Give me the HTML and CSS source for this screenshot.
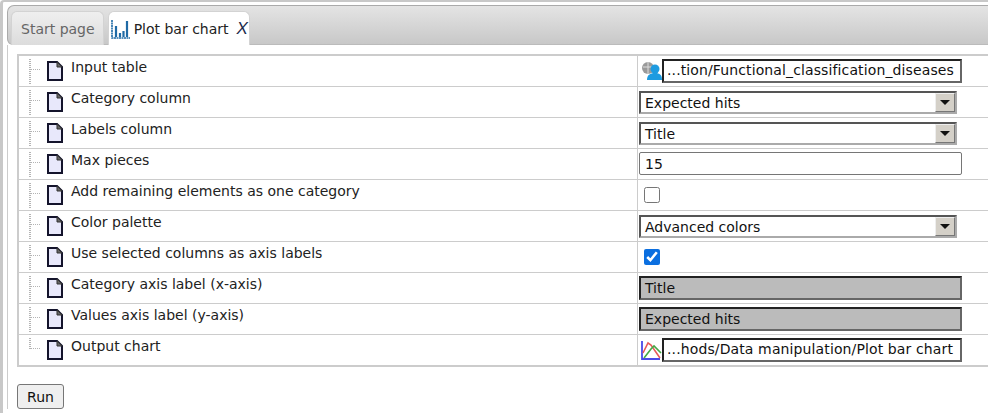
FILE: index.html
```html
<!doctype html>
<html>
<head>
	<meta charset="utf-8">
	<title>Plot bar chart</title>
	<link rel="stylesheet" href="styles.css">
</head>
<body>
<svg class="defs" width="0" height="0">
	<symbol id="file" viewBox="0 0 16 20">
		<path d="M1 1H10L15 6V19H1Z" fill="#e8e8fb" stroke="#14142c" stroke-width="2"/>
		<path d="M10 1L15 6H10Z" fill="#666" stroke="#333"/>
	</symbol>
</svg>
<div class="outer">
	<div class="panel">
		<div class="tabs">
			<div class="tab">Start page</div>
			<div class="tab active">
				<svg class="tab-icon" width="19" height="20" viewBox="0 0 19 20">
					<path d="M1 1V19H19" fill="none" stroke="#1f6aa5" stroke-dasharray="2 .5" stroke-width="1.6"/>
					<path d="M5 18V7M9 18V14M12.500 18V12M16 18V2" stroke="#1f6aa5" stroke-width="2.200" fill="none"/>
				</svg>
				<span>Plot bar chart</span>
				<i class="close">X</i>
			</div>
		</div>
		<div class="content">
			<table class="props">
				<tr>
					<td class="name"><span class="tree"></span><svg class="file"><use href="#file"/></svg><span class="label">Input table</span></td>
					<td class="value"><div class="path">
						<svg class="path-icon" width="21" height="20" viewBox="0 0 21 20">
							<circle cx="7" cy="7" r="6" fill="#9a9a9a"/>
							<path d="M2 6H12M7 1V13" stroke="#ddd"/>
							<circle cx="14" cy="8" r="4.500" fill="#1e9be0"/>
							<path d="M6 19C6 14 9 12 14 12S21 14 21 19Z" fill="#1e9be0"/>
						</svg>
						<div class="path-box">...tion/Functional_classification_diseases</div>
					</div></td>
				</tr>
				<tr>
					<td class="name"><span class="tree"></span><svg class="file"><use href="#file"/></svg><span class="label">Category column</span></td>
					<td class="value"><div class="combo">Expected hits<span class="arrow"></span></div></td>
				</tr>
				<tr>
					<td class="name"><span class="tree"></span><svg class="file"><use href="#file"/></svg><span class="label">Labels column</span></td>
					<td class="value"><div class="combo">Title<span class="arrow"></span></div></td>
				</tr>
				<tr>
					<td class="name"><span class="tree"></span><svg class="file"><use href="#file"/></svg><span class="label">Max pieces</span></td>
					<td class="value"><div class="field">15</div></td>
				</tr>
				<tr>
					<td class="name"><span class="tree"></span><svg class="file"><use href="#file"/></svg><span class="label">Add remaining elements as one category</span></td>
					<td class="value"><input class="check" type="checkbox"></td>
				</tr>
				<tr>
					<td class="name"><span class="tree"></span><svg class="file"><use href="#file"/></svg><span class="label">Color palette</span></td>
					<td class="value"><div class="combo">Advanced colors<span class="arrow"></span></div></td>
				</tr>
				<tr>
					<td class="name"><span class="tree"></span><svg class="file"><use href="#file"/></svg><span class="label">Use selected columns as axis labels</span></td>
					<td class="value"><input class="check" type="checkbox" checked></td>
				</tr>
				<tr>
					<td class="name"><span class="tree"></span><svg class="file"><use href="#file"/></svg><span class="label">Category axis label (x-axis)</span></td>
					<td class="value"><div class="disabled">Title</div></td>
				</tr>
				<tr>
					<td class="name"><span class="tree"></span><svg class="file"><use href="#file"/></svg><span class="label">Values axis label (y-axis)</span></td>
					<td class="value"><div class="disabled">Expected hits</div></td>
				</tr>
				<tr>
					<td class="name"><span class="tree last"></span><svg class="file"><use href="#file"/></svg><span class="label">Output chart</span></td>
					<td class="value"><div class="path">
						<svg class="path-icon" width="21" height="20" viewBox="0 0 21 20">
							<path d="M1 1V19H19" fill="none" stroke="#4a4ae8" stroke-width="1.800"/>
							<path d="M2 13L7 3L10 5L19 18" fill="none" stroke="#e85a5a" stroke-width="1.600"/>
							<path d="M3 18L10 9L13 6L20 13" fill="none" stroke="#45a845" stroke-width="1.600"/>
						</svg>
						<div class="path-box">...hods/Data manipulation/Plot bar chart</div>
					</div></td>
				</tr>
			</table>
			<button class="run">Run</button>
		</div>
	</div>
</div>
</body>
</html>
```

FILE: styles.css
```css
html, body {
	margin: 0;
	height: 413px;
	overflow: hidden;
	background: #fff;
}
body {
	font-family: "DejaVu Sans", sans-serif;
	font-size: 14px;
	color: #222;
}
.defs {
	display: block;
}
.outer {
	height: 413px;
	box-sizing: border-box;
	border-top: 2px solid #c8c8c8;
	border-left: 3px solid #c8c8c8;
	border-radius: 4px 0 0 0;
	padding: 3px 0 0 4px;
}
.tabs {
	display: flex;
	gap: 4px;
	height: 40px;
	padding: 5px 0 0 3px;
	box-sizing: border-box;
	background: linear-gradient(#e4e4e4, #c8c8c8);
	border: 1px solid #aaa;
	border-bottom: 1px solid #bbb;
	border-right: 0;
	border-radius: 7px 0 0 6px;
}
.tab {
	display: flex;
	align-items: center;
	height: 34px;
	padding: 0 8px 0 9px;
	box-sizing: border-box;
	border: 1px solid #d3d3d3;
	border-bottom: 0;
	border-radius: 6px 6px 0 0;
	background: linear-gradient(#efefef, #dcdcdc);
	color: #666;
}
.tab.active {
	padding: 0 1px 0 2px;
	background: #fff;
	color: #222;
}
.tab-icon {
	margin-right: 4px;
}
.close {
	margin-left: 8px;
	font-size: 17px;
	font-family: "Liberation Sans", sans-serif;
	color: #1a2a4a;
}
.content {
	border-left: 1px solid #ccc;
	padding: 9px 0 0 9px;
}
.props {
	width: 980px;
	table-layout: fixed;
	border-collapse: collapse;
	border: 2px solid #ccc;
	border-right: 0;
}
.props td {
	height: 30px;
	padding: 0;
	border: 1px solid #ccc;
	vertical-align: top;
}
.name {
	width: 618px;
}
.tree {
	float: left;
	width: 11px;
	height: 26px;
	margin: 3px 7px 0 10px;
	background:
		linear-gradient(#b4b4b4 50%, transparent 50%),
		linear-gradient(90deg, #b4b4b4 50%, transparent 50%);
	background-position: 0 0, 2px 10px;
	background-repeat: repeat-y, repeat-x;
	background-size: 2px 2px, 2px 1px;
}
.tree.last {
	height: 12px;
}
.file {
	float: left;
	width: 16px;
	height: 20px;
	margin: 5px 8px 0 0;
}
.label {
	display: block;
	padding-top: 2px;
	line-height: 18px;
}
.path {
	display: flex;
	align-items: flex-start;
	height: 30px;
	padding-left: 3px;
}
.path-icon {
	flex: none;
	margin-top: 5px;
}
.path-box {
	width: 300px;
	height: 24px;
	margin-top: 3px;
	box-sizing: border-box;
	border: 2px solid;
	border-color: #222 #666 #666 #222;
	padding-left: 3px;
	line-height: 19px;
	letter-spacing: .12px;
	color: #111;
	white-space: nowrap;
	overflow: hidden;
}
.combo {
	position: relative;
	width: 318px;
	height: 23px;
	margin: 4px 0 0 1px;
	box-sizing: border-box;
	border: 2px solid;
	border-color: #555 #aaa #aaa #555;
	padding-left: 4px;
	line-height: 20px;
	color: #111;
}
.arrow {
	position: absolute;
	top: 0;
	right: 0;
	width: 20px;
	height: 19px;
	box-sizing: border-box;
	background: #d4d0c8;
	border: 1px solid;
	border-color: #eee #777 #777 #eee;
}
.arrow::after {
	content: "";
	position: absolute;
	left: 4px;
	top: 6px;
	border: 5px solid transparent;
	border-top: 5px solid #111;
	border-bottom: 0;
}
.field {
	width: 323px;
	height: 23px;
	margin: 3px 0 0 1px;
	box-sizing: border-box;
	border: 1px solid #767676;
	border-radius: 2px;
	padding-left: 5px;
	line-height: 22px;
	color: #111;
}
.check {
	display: block;
	width: 16px;
	height: 16px;
	margin: 7px 0 0 6px;
	accent-color: #0b6fe0;
}
.disabled {
	width: 323px;
	height: 24px;
	margin: 3px 0 0 1px;
	box-sizing: border-box;
	border: 2px solid;
	border-color: #222 #666 #666 #222;
	background: #bbb;
	padding-left: 4px;
	line-height: 21px;
	color: #111;
}
.run {
	display: block;
	margin-top: 17px;
	width: 47px;
	height: 25px;
	padding: 0;
	font: 14px "DejaVu Sans", sans-serif;
	color: #111;
	background: #efefef;
	border: 1px solid #767676;
	border-radius: 3px;
}
```
